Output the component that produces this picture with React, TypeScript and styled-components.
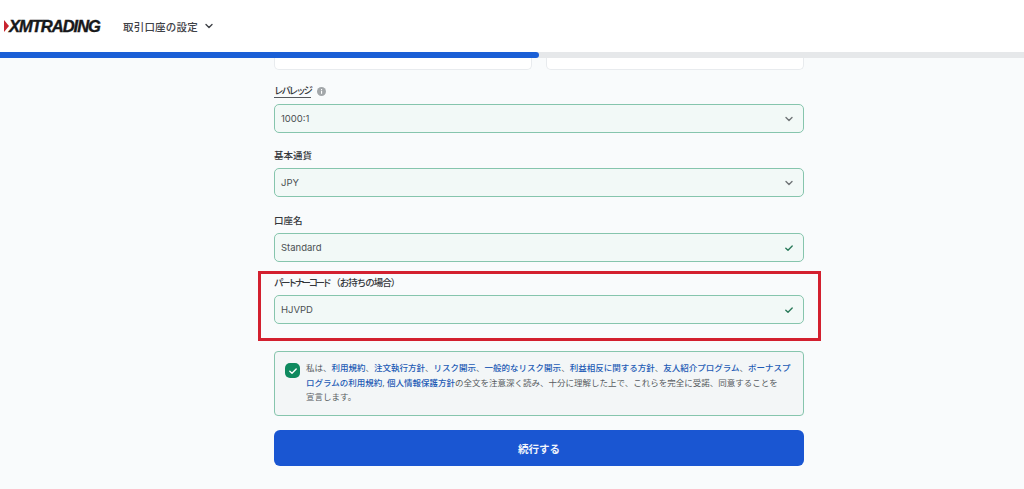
import React from 'react';
import styled, { createGlobalStyle } from 'styled-components';

const GlobalStyle = createGlobalStyle`
  html, body {
    margin: 0;
    padding: 0;
    background: #f9fbfc;
  }
  body {
    font-family: "Inter", "Noto Sans CJK JP", sans-serif;
    overflow: hidden;
  }
`;

const Page = styled.div`
  width: 1024px;
  height: 489px;
  overflow: hidden;
  display: flex;
  flex-direction: column;
`;

const Header = styled.header`
  height: 52px;
  background: #fff;
  display: flex;
  align-items: center;
  padding-left: 4px;
`;

const Logo = styled.div`
  display: flex;
  align-items: center;
  width: 119px;
`;

const LogoText = styled.span`
  font-family: "Liberation Sans", sans-serif;
  font-size: 16.5px;
  font-weight: 700;
  font-style: italic;
  color: #17181a;
  letter-spacing: -1px;
  -webkit-text-stroke: 0.4px #17181a;
`;

const Menu = styled.div`
  display: flex;
  align-items: center;
  gap: 6px;
  font-size: 10.5px;
  font-weight: 500;
  color: #3f4247;
  letter-spacing: 0.2px;
`;

const Progress = styled.div`
  height: 6px;
  background: #e6e8ea;
`;

const ProgressFill = styled.div`
  width: 539px;
  height: 100%;
  background: #1a5fd6;
  border-radius: 0 3px 3px 0;
`;

const Form = styled.main`
  position: relative;
  width: 530px;
  margin-left: 274px;
  display: flex;
  flex-direction: column;
`;

const PartialRow = styled.div`
  display: grid;
  grid-template-columns: 258px 258px;
  justify-content: space-between;
  height: 12px;
`;

const PartialInput = styled.div`
  background: #fff;
  border: 1px solid #e8ebee;
  border-top: none;
  border-radius: 0 0 5px 5px;
`;

const Field = styled.div<{ $top: number }>`
  margin-top: ${(p) => p.$top}px;
`;

const Label = styled.label`
  display: flex;
  align-items: center;
  gap: 6px;
  height: 14px;
  margin-bottom: 6px;
  font-size: 9.5px;
  font-weight: 500;
  color: #33363a;
`;

const Underlined = styled.span`
  border-bottom: 1px solid #55585c;
  line-height: 12px;
  letter-spacing: -2.1px;
`;

const Kana = styled.span`
  letter-spacing: -2.6px;
`;

const Note = styled.span`
  margin-left: 2px;
  letter-spacing: -1px;
`;

const Box = styled.div`
  height: 29px;
  box-sizing: border-box;
  padding: 0 9px 0 6px;
  display: flex;
  align-items: center;
  justify-content: space-between;
  background: #f2f9f7;
  border: 1px solid #86c5ad;
  border-radius: 5px;
  font-size: 9.5px;
  color: #4a5052;
`;

const Highlight = styled.div`
  position: absolute;
  left: -16px;
  top: 213px;
  width: 563px;
  height: 70px;
  box-sizing: border-box;
  border: 3px solid #d3202f;
  pointer-events: none;
`;

const Agreement = styled.div`
  margin-top: 27px;
  height: 65px;
  box-sizing: border-box;
  padding: 9px 10px 0 10px;
  display: flex;
  gap: 6px;
  background: #f3f6f7;
  border: 1px solid #86c5ad;
  border-radius: 4px;
`;

const Check = styled.div`
  flex: none;
  width: 15px;
  height: 15px;
  margin-top: 2px;
  border-radius: 5px;
  background: #0f8a5f;
  display: flex;
  align-items: center;
  justify-content: center;
`;

const AgreementText = styled.p`
  margin: 0;
  font-size: 8.5px;
  line-height: 14.5px;
  color: #565b60;
`;

const TermLink = styled.a`
  color: #1d5bb5;
  font-weight: 500;
  text-decoration: none;
`;

const Submit = styled.button`
  margin-top: 14px;
  height: 36px;
  border: none;
  border-radius: 6px;
  background: #1a56d2;
  color: #f2f5fb;
  font-family: inherit;
  font-size: 10.5px;
  font-weight: 700;
`;

const Chevron = ({ color = '#6f7477', size = 10 }: { color?: string; size?: number }) => (
  <svg width={size} height={size} viewBox="0 0 10 10" fill="none">
    <path d="M2 3.6 5 6.6 8 3.6" stroke={color} strokeWidth="1.4" strokeLinecap="round" strokeLinejoin="round" />
  </svg>
);

const Tick = ({ color = '#2a7a5a', size = 10 }: { color?: string; size?: number }) => (
  <svg width={size} height={size} viewBox="0 0 10 10" fill="none">
    <path d="M1.8 5.2 4 7.2 8.2 3" stroke={color} strokeWidth="1.4" strokeLinecap="round" strokeLinejoin="round" />
  </svg>
);

const InfoIcon = () => (
  <svg width="9" height="9" viewBox="0 0 9 9">
    <circle cx="4.5" cy="4.5" r="4.5" fill="#a3a7aa" />
    <rect x="4" y="3.8" width="1.1" height="3" fill="#fff" />
    <rect x="4" y="2" width="1.1" height="1.1" fill="#fff" />
  </svg>
);

const terms = [
  '利用規約',
  '注文執行方針',
  'リスク開示',
  '一般的なリスク開示',
  '利益相反に関する方針',
  '友人紹介プログラム',
];

export default function App() {
  return (
    <Page>
      <GlobalStyle />
      <Header>
        <Logo>
          <svg width="5" height="12" viewBox="0 0 5 12">
            <path d="M0 0 5 6 0 12Z" fill="#c8242f" />
          </svg>
          <LogoText>XMTRADING</LogoText>
        </Logo>
        <Menu>
          取引口座の設定
          <Chevron color="#3f4247" />
        </Menu>
      </Header>
      <Progress>
        <ProgressFill />
      </Progress>
      <Form>
        <PartialRow>
          <PartialInput />
          <PartialInput />
        </PartialRow>
        <Field $top={14}>
          <Label>
            <Underlined>レバレッジ</Underlined>
            <InfoIcon />
          </Label>
          <Box>
            1000:1
            <Chevron />
          </Box>
        </Field>
        <Field $top={15}>
          <Label>基本通貨</Label>
          <Box>
            JPY
            <Chevron />
          </Box>
        </Field>
        <Field $top={16}>
          <Label>口座名</Label>
          <Box>
            Standard
            <Tick />
          </Box>
        </Field>
        <Field $top={13}>
          <Label>
            <span>
              <Kana>パートナーコード</Kana>
              <Note>（お持ちの場合）</Note>
            </span>
          </Label>
          <Box>
            HJVPD
            <Tick />
          </Box>
        </Field>
        <Highlight />
        <Agreement>
          <Check>
            <Tick color="#fff" size={10} />
          </Check>
          <AgreementText>
            私は、
            {terms.map((term) => (
              <React.Fragment key={term}>
                <TermLink href="#">{term}</TermLink>、
              </React.Fragment>
            ))}
            <TermLink href="#">ボーナスプログラムの利用規約</TermLink>, <TermLink href="#">個人情報保護方針</TermLink>
            の全文を注意深く読み、十分に理解した上で、これらを完全に受諾、同意することを
            <br />
            宣言します。
          </AgreementText>
        </Agreement>
        <Submit>続行する</Submit>
      </Form>
    </Page>
  );
}
